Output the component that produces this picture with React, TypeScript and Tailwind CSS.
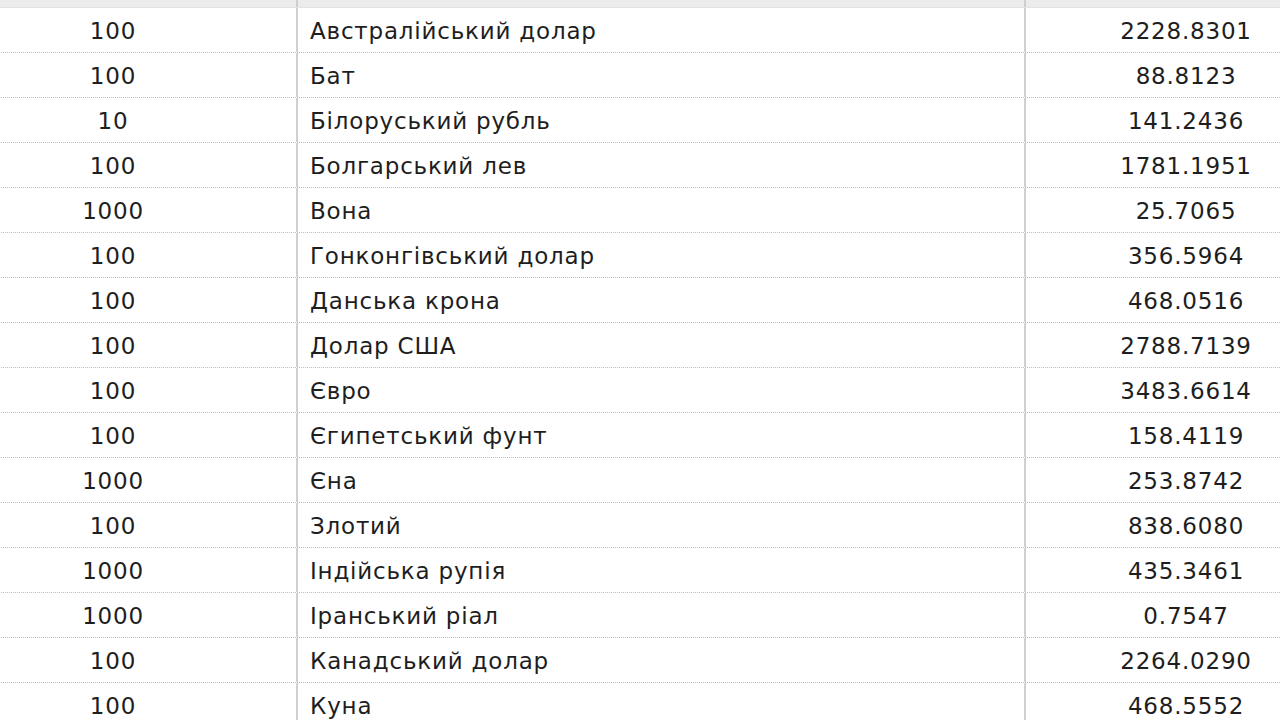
const rates = [
  { units: "100", name: "Австралійський долар", value: "2228.8301" },
  { units: "100", name: "Бат", value: "88.8123" },
  { units: "10", name: "Білоруський рубль", value: "141.2436" },
  { units: "100", name: "Болгарський лев", value: "1781.1951" },
  { units: "1000", name: "Вона", value: "25.7065" },
  { units: "100", name: "Гонконгівський долар", value: "356.5964" },
  { units: "100", name: "Данська крона", value: "468.0516" },
  { units: "100", name: "Долар США", value: "2788.7139" },
  { units: "100", name: "Євро", value: "3483.6614" },
  { units: "100", name: "Єгипетський фунт", value: "158.4119" },
  { units: "1000", name: "Єна", value: "253.8742" },
  { units: "100", name: "Злотий", value: "838.6080" },
  { units: "1000", name: "Індійська рупія", value: "435.3461" },
  { units: "1000", name: "Іранський ріал", value: "0.7547" },
  { units: "100", name: "Канадський долар", value: "2264.0290" },
  { units: "100", name: "Куна", value: "468.5552" },
];

export default function App() {
  return (
    <div className="h-[720px] w-[1280px] overflow-hidden bg-white font-['DejaVu_Sans',Verdana,sans-serif] text-[23px] tracking-[0.8px] text-[#1e1e1e]">
      <div className="-ml-[70px] w-[1416px]">
        <div className="grid h-2 grid-cols-[366px_728px_322px] border-b border-[#e2e2e2] bg-[#ececec]">
          <div />
          <div className="border-l-2 border-[#cfcfcf]" />
          <div className="border-l-2 border-[#cfcfcf]" />
        </div>
        {rates.map((r) => (
          <div
            key={r.name}
            className="grid h-[45px] grid-cols-[366px_728px_322px] border-b border-dotted border-[#bdbdbd]"
          >
            <div className="flex items-center justify-center pt-0.5">{r.units}</div>
            <div className="flex items-center border-l-2 border-[#d0d0d0] pl-3 pt-0.5">{r.name}</div>
            <div className="flex items-center justify-center border-l-2 border-[#d0d0d0] pt-0.5">{r.value}</div>
          </div>
        ))}
      </div>
    </div>
  );
}
